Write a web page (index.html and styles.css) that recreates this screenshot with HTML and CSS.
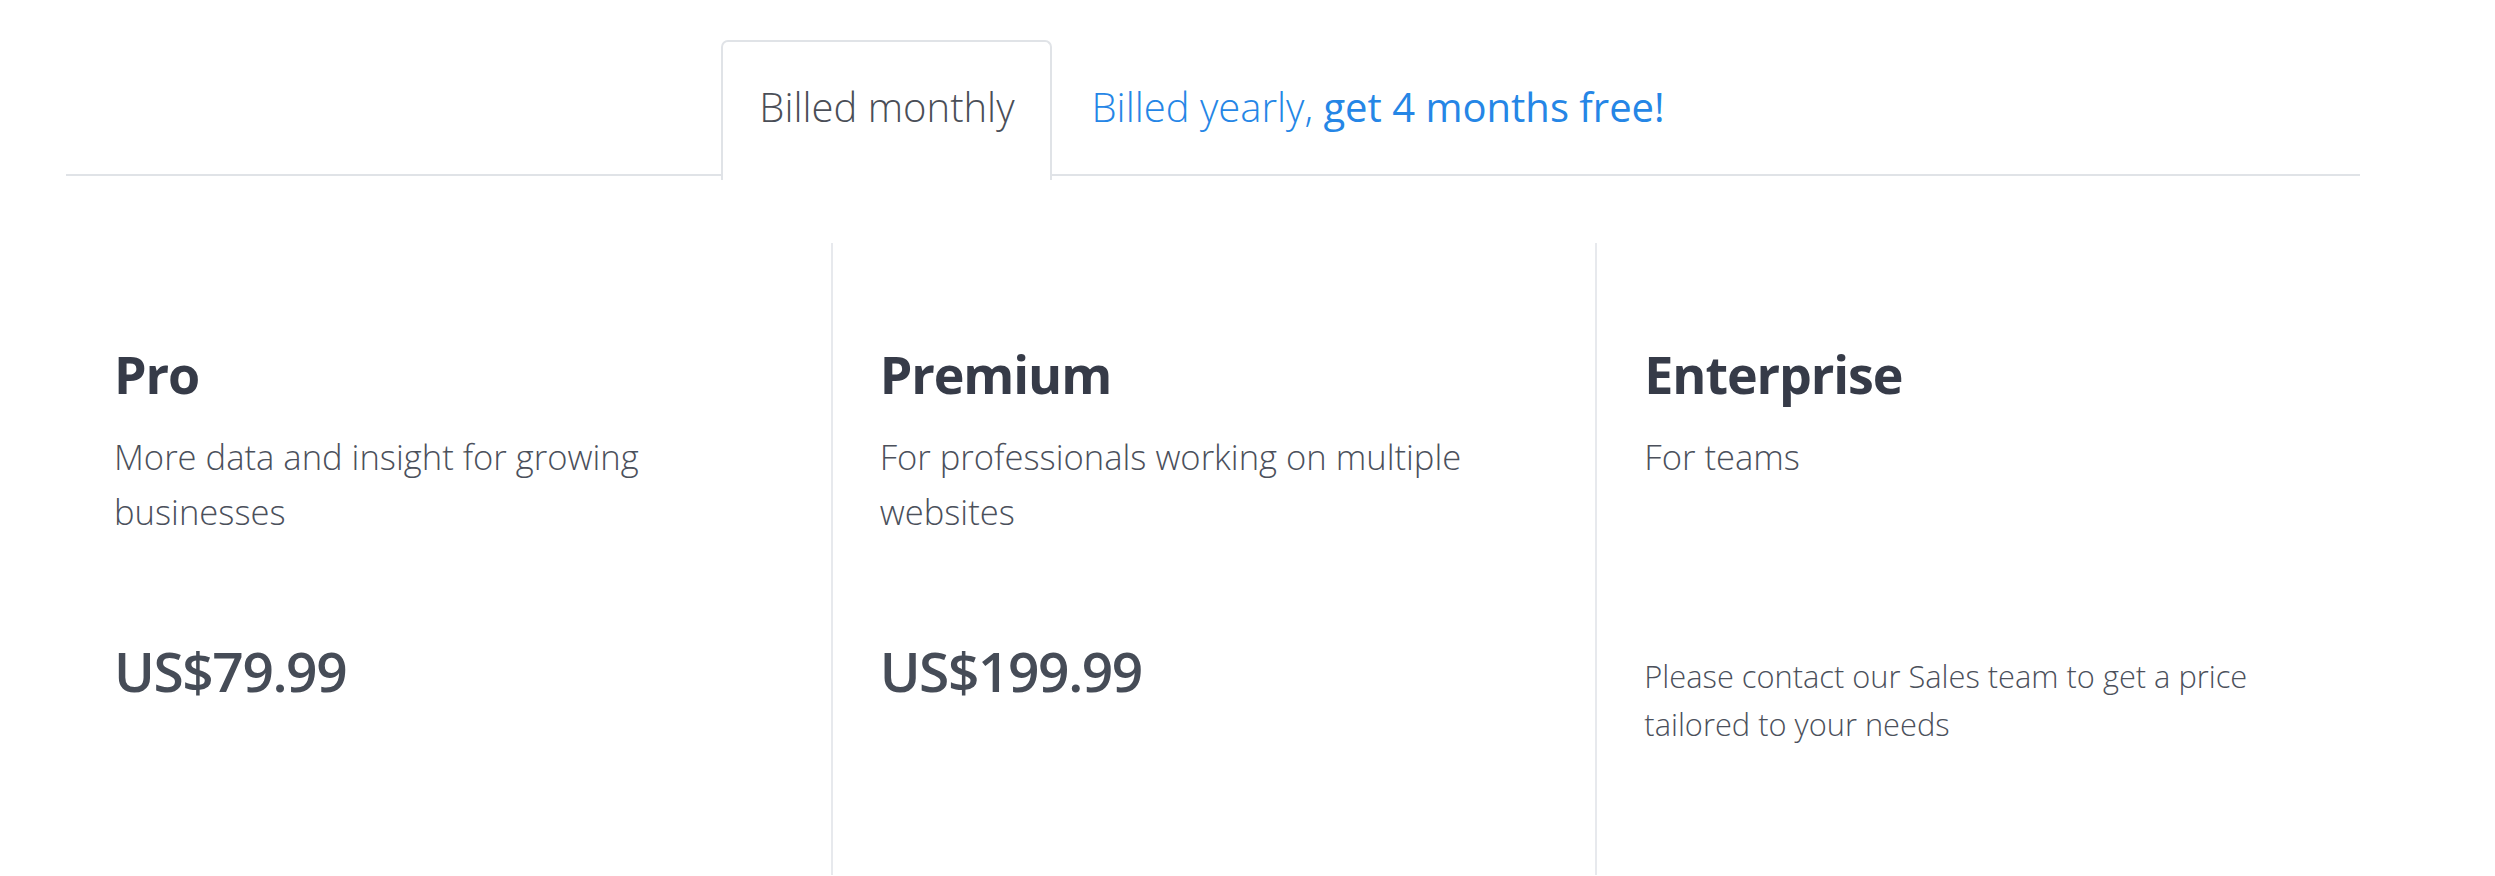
FILE: index.html
```html
<!DOCTYPE html>
<html lang="en">
<head>
<meta charset="utf-8">
<title>Pricing</title>
<link rel="stylesheet" href="styles.css">
</head>
<body>
<div class="pricing">
  <div class="tabs">
    <div class="tab active">Billed monthly</div>
    <div class="tab link"><span class="light">Billed yearly,</span> <span class="strong">get 4 months free!</span></div>
  </div>
  <div class="plans">
    <div class="plan">
      <h2 class="name">Pro</h2>
      <p class="desc">More data and insight for growing businesses</p>
      <div class="price">US$79.99</div>
    </div>
    <div class="plan">
      <h2 class="name">Premium</h2>
      <p class="desc">For professionals working on multiple websites</p>
      <div class="price">US$199.99</div>
    </div>
    <div class="plan">
      <h2 class="name">Enterprise</h2>
      <p class="desc">For teams</p>
      <p class="contact">Please contact our Sales team to get a price tailored to your needs</p>
    </div>
  </div>
</div>
</body>
</html>
```

FILE: styles.css
```css
html, body {
  margin: 0;
  padding: 0;
  background: #ffffff;
}
body {
  font-family: "Open Sans", "Noto Sans", sans-serif;
  color: #4a4f5a;
}
.pricing {
  margin-left: 66px;
  width: 2294px;
}
.tabs {
  display: flex;
  justify-content: center;
  padding-top: 40px;
  border-bottom: 2px solid #e0e3e7;
  height: 134px;
}
.tab {
  font-size: 40px;
  font-weight: 300;
  line-height: 54px;
  padding: 38px 37px 0 37px;
  border: 2px solid transparent;
  border-bottom: none;
  border-radius: 7px 7px 0 0;
  height: 98px;
}
.tab.active {
  color: #4a4e57;
  border-color: #e0e3e7;
  background: #ffffff;
  height: 100px;
  margin-bottom: -2px;
  padding-left: 36px;
  padding-right: 35px;
}
.tab.link {
  color: #2586e6;
  padding-left: 38px;
  padding-right: 38px;
}
.tab.link .strong {
  font-weight: 400;
}
.plans {
  display: grid;
  grid-template-columns: repeat(3, 1fr);
  margin-top: 67px;
}
.plan {
  padding: 100px 0 0 48px;
  min-height: 532px;
}
.plan + .plan {
  border-left: 2px solid #e7e9ed;
  padding-left: 47px;
}
.name {
  margin: 0;
  font-size: 52px;
  line-height: 62px;
  font-weight: 700;
  letter-spacing: -1.1px;
  color: #363b48;
}
.desc {
  margin: 25px 0 0 0;
  font-size: 34.6px;
  line-height: 54.5px;
  font-weight: 300;
  color: #4b505b;
  min-height: 109px;
  max-width: 660px;
}
.price {
  margin-top: 99px;
  font-size: 55px;
  line-height: 66px;
  font-weight: 560;
  letter-spacing: -1.4px;
  color: #464c57;
}
.contact {
  margin: 113px 0 0 0;
  font-size: 30.8px;
  line-height: 48px;
  font-weight: 300;
  color: #4b505b;
  max-width: 660px;
}
```
